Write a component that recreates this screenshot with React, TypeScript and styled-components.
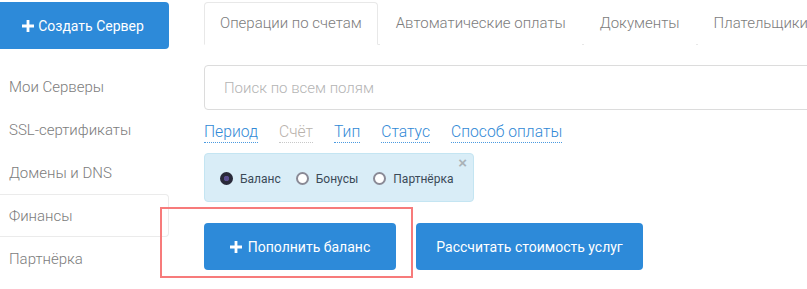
import React from "react";
import styled, {createGlobalStyle} from "styled-components";

const GlobalStyle = createGlobalStyle`
  html, body {
    margin: 0;
    padding: 0;
    background: #fff;
    overflow: hidden;
  }

  body {
    font-family: Roboto, "Liberation Sans", sans-serif;
    color: #555;
  }
`;

const Page = styled.div`
  display: flex;
  gap: 35px;
  width: 807px;
  height: 289px;
  overflow: hidden;
  position: relative;
`;

const Sidebar = styled.nav`
  flex: 0 0 169px;
  display: flex;
  flex-direction: column;
  padding-top: 2px;
`;

const CreateButton = styled.button`
  height: 47px;
  border: 0;
  border-radius: 0 4px 4px 0;
  background: #2d8ad9;
  color: #fff;
  font: 400 14px Roboto, "Liberation Sans", sans-serif;
  display: flex;
  align-items: center;
  justify-content: center;
  gap: 4px;
  margin-bottom: 16px;
  padding: 0 3px 0 0;
`;

const SideItem = styled.a<{ $active?: boolean }>`
  height: 43px;
  box-sizing: border-box;
  display: flex;
  align-items: center;
  padding-left: 9px;
  font-size: 15px;
  font-weight: 300;
  color: #7c7c7c;
  border: 1px solid ${({$active}) => $active ? "#ebebeb" : "transparent"};
  border-left: 0;
  border-radius: 0 4px 4px 0;
`;

const Main = styled.main`
  flex: 1 0 auto;
  display: flex;
  flex-direction: column;
  padding-top: 2px;
`;

const Tabs = styled.div`
  display: flex;
  height: 42px;
  border-bottom: 1px solid #e8e8e8;
  white-space: nowrap;
  width: 720px;
`;

const Tab = styled.div<{ $active?: boolean }>`
  box-sizing: border-box;
  height: 43px;
  display: flex;
  align-items: center;
  padding: 0 15px 1px 15px;
  margin-right: 2px;
  font-size: 15px;
  font-weight: 300;
  color: #7c7c7c;
  border: 1px solid ${({$active}) => $active ? "#e8e8e8" : "transparent"};
  border-bottom-color: ${({$active}) => $active ? "#fff" : "transparent"};
  border-radius: 4px 4px 0 0;
  background: #fff;
`;

const Search = styled.input`
  box-sizing: border-box;
  margin-top: 20px;
  width: 640px;
  height: 45px;
  border: 1px solid #dcdcdc;
  border-radius: 4px;
  padding: 0 19px;
  font: 300 15px Roboto, "Liberation Sans", sans-serif;
  color: #555;
  outline: none;

  &::placeholder {
    color: #b4b4b4;
  }
`;

const Filters = styled.div`
  display: flex;
  gap: 21px;
  margin-top: 12px;
  height: 21px;
`;

const FilterLink = styled.a<{ $muted?: boolean }>`
  font-size: 15.7px;
  font-weight: 300;
  line-height: 19px;
  color: ${({$muted}) => $muted ? "#b9b2ab" : "#3189d6"};
  border-bottom: 1px dotted ${({$muted}) => $muted ? "#c8c8c8" : "#4a9ae0"};
`;

const Alert = styled.div`
  box-sizing: border-box;
  position: relative;
  margin-top: 10px;
  width: 270px;
  height: 49px;
  background: #d9edf7;
  border: 1px solid #c4e5f2;
  border-radius: 4px;
  display: flex;
  align-items: center;
  gap: 15px;
  padding: 2px 0 0 15px;
`;

const CloseX = styled.span`
  position: absolute;
  top: 0;
  right: 6px;
  font: 700 15px "Liberation Sans", sans-serif;
  color: #a9b2b7;
`;

const RadioLabel = styled.label`
  display: flex;
  align-items: center;
  gap: 7px;
  font-size: 12px;
  color: #3b4a57;
`;

const RadioDot = styled.span<{ $checked?: boolean }>`
  box-sizing: border-box;
  width: 13px;
  height: 13px;
  border-radius: 50%;
  border: 2px solid ${({$checked}) => $checked ? "#2a2a3a" : "#8a8a96"};
  background: ${({$checked}) => $checked ? "radial-gradient(circle, #5a4d8f 0 2.5px, #2a2a3a 3px)" : "#fff"};
`;

const Actions = styled.div`
  display: flex;
  gap: 20px;
  margin-top: 21px;
`;

const Button = styled.button<{ $width: number }>`
  width: ${({$width}) => $width}px;
  height: 47px;
  border: 0;
  border-radius: 4px;
  background: #2d8ad9;
  color: #fff;
  font: 400 14px Roboto, "Liberation Sans", sans-serif;
  display: flex;
  align-items: center;
  justify-content: center;
  gap: 6px;
  padding: 0;
`;

const Highlight = styled.div`
  position: absolute;
  left: 160px;
  top: 207px;
  width: 253px;
  height: 71px;
  box-sizing: border-box;
  border: 2px solid #f77b7b;
  pointer-events: none;
`;

const Plus = ({size = 12}: { size?: number }) => (
    <svg width={size} height={size} viewBox="0 0 12 12">
        <path d="M4.6 0h2.8v4.6H12v2.8H7.4V12H4.6V7.4H0V4.6h4.6z" fill="#fff"/>
    </svg>
);

const sideItems = ["Мои Серверы", "SSL-сертификаты", "Домены и DNS", "Финансы", "Партнёрка"];
const tabs = ["Операции по счетам", "Автоматические оплаты", "Документы", "Плательщики"];
const filters = ["Период", "Счёт", "Тип", "Статус", "Способ оплаты"];
const radios = ["Баланс", "Бонусы", "Партнёрка"];

const App = () => {
    return <>
        <GlobalStyle/>
        <Page>
            <Sidebar>
                <CreateButton><Plus size={12}/>Создать Сервер</CreateButton>
                {sideItems.map((item) =>
                    <SideItem key={item} $active={item === "Финансы"}>{item}</SideItem>
                )}
            </Sidebar>
            <Main>
                <Tabs>
                    {tabs.map((tab, index) => <Tab key={tab} $active={index === 0}>{tab}</Tab>)}
                </Tabs>
                <Search placeholder="Поиск по всем полям"/>
                <Filters>
                    {filters.map((f) => <FilterLink key={f} $muted={f === "Счёт"}>{f}</FilterLink>)}
                </Filters>
                <Alert>
                    <CloseX>×</CloseX>
                    {radios.map((r, index) =>
                        <RadioLabel key={r}><RadioDot $checked={index === 0}/>{r}</RadioLabel>
                    )}
                </Alert>
                <Actions>
                    <Button $width={192}><Plus/>Пополнить баланс</Button>
                    <Button $width={227}>Рассчитать стоимость услуг</Button>
                </Actions>
            </Main>
            <Highlight/>
        </Page>
    </>
}

export default App;
